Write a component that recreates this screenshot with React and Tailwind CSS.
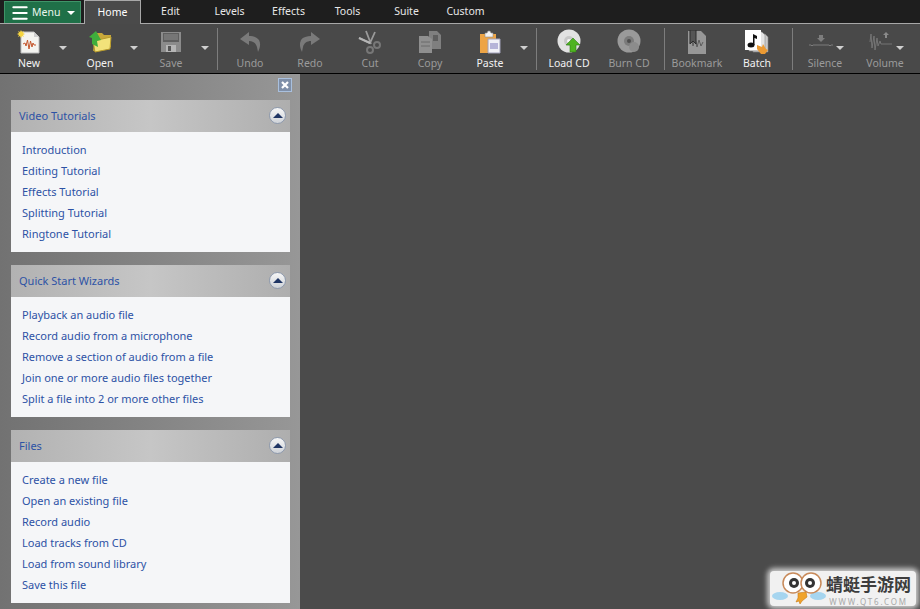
import { Menu } from "lucide-react";

const font = { fontFamily: '"Noto Sans", "DejaVu Sans", sans-serif' };

const tabs = ["Edit", "Levels", "Effects", "Tools", "Suite", "Custom"];

const panels = [
  {
    title: "Video Tutorials",
    links: ["Introduction", "Editing Tutorial", "Effects Tutorial", "Splitting Tutorial", "Ringtone Tutorial"],
  },
  {
    title: "Quick Start Wizards",
    links: [
      "Playback an audio file",
      "Record audio from a microphone",
      "Remove a section of audio from a file",
      "Join one or more audio files together",
      "Split a file into 2 or more other files",
    ],
  },
  {
    title: "Files",
    links: [
      "Create a new file",
      "Open an existing file",
      "Record audio",
      "Load tracks from CD",
      "Load from sound library",
      "Save this file",
    ],
  },
];

function NewIcon() {
  return (
    <svg width="24" height="24" viewBox="0 0 24 24">
      <path d="M4 2h13l5 5v16H4z" fill="#f4f4f0" stroke="#bdbdbd" />
      <path d="M17 2v5h5z" fill="#cfcfcf" />
      <path d="M6 14l2-1 1 3 1.500-6 1.500 9 1.500-8 1.500 6 1-4 1 2h2" fill="none" stroke="#c4552b" strokeWidth="1" />
      <path d="M4 0l1 2 2-1-1 2 2 1-2 1 1 2-2-1-1 2-1-2-2 1 1-2-2-1 2-1-1-2 2 1z" fill="#f7d640" />
    </svg>
  );
}

function OpenIcon() {
  return (
    <svg width="24" height="22" viewBox="0 0 24 22">
      <path d="M8 2h6l2 2h7v12L5 20z" fill="#c9a93a" />
      <path d="M5 10l18-4-1 12-15 3z" fill="#f2e27a" stroke="#b89b2c" />
      <path d="M8 0L1 6l3 1v6l6 3-1-6 4-1z" fill="#3fae3c" />
    </svg>
  );
}

function SaveIcon() {
  return (
    <svg width="20" height="20" viewBox="0 0 20 20">
      <path d="M0 0h20v20H0z" fill="#8b8b8b" />
      <path d="M2 1h16v9H2z" fill="#5f5f5f" />
      <path d="M3 3h14M3 5h14M3 7h14" stroke="#8e8e8e" />
      <path d="M5 13h10v7H5z" fill="#b5b5b5" />
      <path d="M7 14h3v5H7z" fill="#555555" />
    </svg>
  );
}

function UndoIcon({ flip }) {
  return (
    <svg width="22" height="22" viewBox="0 0 22 22" className={flip ? "-scale-x-100" : ""}>
      <path d="M10 1L1 8l9 6v-4c4 0 7 2 8 6l1 5c2-4 3-8 1-12-2-3-6-4-10-4z" fill="#7a7a7a" />
    </svg>
  );
}

function CutIcon() {
  return (
    <svg width="24" height="24" viewBox="0 0 24 24">
      <path d="M8 1l5 13M17 2l-5 11L1 8" fill="none" stroke="#9a9a9a" strokeWidth="1.800" />
      <path d="M1 8l11 5" stroke="#b5b5b5" strokeWidth="2" />
      <circle cx="12" cy="20" r="3" fill="none" stroke="#777777" strokeWidth="2" />
      <circle cx="19" cy="15" r="3" fill="none" stroke="#777777" strokeWidth="2" />
    </svg>
  );
}

function CopyIcon() {
  return (
    <svg width="24" height="24" viewBox="0 0 24 24">
      <path d="M11 1h8l4 4v14H11z" fill="#7f7f7f" />
      <path d="M1 6h9l4 3v14H1z" fill="#8f8f8f" />
      <path d="M3 12h9M3 16h9" stroke="#6a6a6a" />
      <path d="M15 5h5v6h-5z" fill="#5e5e5e" />
    </svg>
  );
}

function PasteIcon() {
  return (
    <svg width="22" height="24" viewBox="0 0 22 24">
      <path d="M1 4h16v19H1z" fill="#eda445" />
      <path d="M6 3h2l1-2h2l1 2h2v4H6z" fill="#f2f2f2" stroke="#8f8f8f" strokeWidth=".6" />
      <path d="M9 9h12v14H9z" fill="#f1f1f7" stroke="#a0a0b8" />
      <path d="M11 13h8v6h-8z" fill="#b6b4d8" />
    </svg>
  );
}

function DiscIcon({ load }) {
  const edge = load ? "#e2e2e2" : "#9a9a9a";
  const inner = load ? "#c8c8c8" : "#7b7b7b";
  return (
    <svg width="26" height="26" viewBox="0 0 26 26">
      <circle cx="13" cy="12" r="11.500" fill={edge} />
      <circle cx="13" cy="12" r="5" fill={inner} />
      <circle cx="13" cy="12" r="2" fill={load ? "#f5f5f5" : "#4d4d4d"} />
      {load ? (
        <path d="M17 9l7 7h-4v7h-6v-7h-4z" fill="#4fb321" stroke="#2f7d15" strokeWidth=".6" />
      ) : (
        <circle cx="18" cy="18" r="5" fill="#8c8c8c" />
      )}
    </svg>
  );
}

function BookmarkIcon() {
  return (
    <svg width="20" height="24" viewBox="0 0 20 24">
      <path d="M1 1h13l5 5v18H1z" fill="#979797" />
      <path d="M3 13l2-3 1 6 2-8 2 9 2-7 2 6 2-4" fill="none" stroke="#5b5b5b" />
      <path d="M3 0h6v14l-3-3-3 3z" fill="#555555" stroke="#2c2c2c" />
    </svg>
  );
}

function BatchIcon() {
  return (
    <svg width="24" height="24" viewBox="0 0 24 24">
      <path d="M8 4h12l3 3v15H8z" fill="#c9c9c9" stroke="#888888" strokeWidth=".6" />
      <path d="M4 2h13l3 3v16H4z" fill="#e3e3e3" stroke="#888888" strokeWidth=".6" />
      <path d="M0 0h16v20H0z" fill="#ffffff" />
      <ellipse cx="6" cy="15" rx="3.500" ry="2.500" fill="#111111" />
      <path d="M8 15V4l4 2v3l-2.500-1v7z" fill="#111111" />
      <path d="M12 15l5 2 1-3 3 5 2 1-3 4h-4l-4-5z" fill="#eb9a33" />
    </svg>
  );
}

function SilenceIcon() {
  return (
    <svg width="24" height="16" viewBox="0 0 24 16">
      <path d="M10 1h4v3h2l-4 4-4-4h2z" fill="#7d7d7d" />
      <path d="M0 11h2l1 1 1-1h16l1 1 1-1h2" fill="none" stroke="#7d7d7d" />
    </svg>
  );
}

function VolumeIcon() {
  return (
    <svg width="24" height="20" viewBox="0 0 24 20">
      <path d="M1 10l1-8 1 14 2-12 1 14 2-12 1 8 2-5 1 3h11" fill="none" stroke="#757575" />
      <path d="M17 0l3 3h-2v3h-2V3h-2z" fill="#8a8a8a" />
    </svg>
  );
}

const tools = [
  { label: "New", w: "w-[58px]", icon: <NewIcon />, on: true, arrow: "w-[13px] pl-[1px]" },
  { label: "Open", w: "w-[58px]", icon: <OpenIcon />, on: true, arrow: "w-[13px] pl-[1px]" },
  { label: "Save", w: "w-[58px]", icon: <SaveIcon />, arrow: "w-[13px] pl-[1px]", sep: "ml-[4px]" },
  { label: "Undo", w: "w-[60px]", icon: <UndoIcon /> },
  { label: "Redo", w: "w-[60px]", icon: <UndoIcon flip /> },
  { label: "Cut", w: "w-[60px]", icon: <CutIcon /> },
  { label: "Copy", w: "w-[60px]", icon: <CopyIcon /> },
  { label: "Paste", w: "w-[60px]", icon: <PasteIcon />, on: true, arrow: "w-[10px]", sep: "ml-[6px]" },
  { label: "Load CD", w: "w-[60px]", icon: <DiscIcon load />, on: true },
  { label: "Burn CD", w: "w-[60px]", icon: <DiscIcon />, sep: "ml-[5px]" },
  { label: "Bookmark", w: "w-[60px]", icon: <BookmarkIcon /> },
  { label: "Batch", w: "w-[60px]", icon: <BatchIcon />, on: true, sep: "ml-[5px]" },
  { label: "Silence", w: "w-[60px]", icon: <SilenceIcon />, over: true },
  { label: "Volume", w: "w-[60px]", icon: <VolumeIcon />, over: true },
];

function Caret() {
  return <div className="w-0 h-0 border-x-4 border-x-transparent border-t-[4px] border-t-[#cfcfcf]" />;
}

function ToolButton({ tool }) {
  return (
    <>
      <div className={`${tool.w} relative h-full flex flex-col items-center`}>
        <div className={`h-[32px] flex items-center ${tool.over ? "pr-2" : ""}`}>{tool.icon}</div>
        <span className={`text-[10.5px] leading-[14px] -mt-[2px] ${tool.on ? "text-[#f2f2f2]" : "text-[#9b9b9b]"}`}>
          {tool.label}
        </span>
        {tool.over && (
          <div className="absolute right-[11px] top-[20px]">
            <Caret />
          </div>
        )}
      </div>
      {tool.arrow && (
        <div className={`${tool.arrow} h-full flex pt-[20px]`}>
          <Caret />
        </div>
      )}
      {tool.sep && <div className={`${tool.sep} mr-[2px] w-[1px] h-[42px] mt-[2px] bg-[#7d7d7d]`} />}
    </>
  );
}

function Panel({ panel }) {
  return (
    <section className="w-[279px]">
      <div className="h-[32px] px-2 flex items-center justify-between bg-gradient-to-r from-[#b2b2b2] via-[#c6c6c6] to-[#aeaeae]">
        <h2 className="text-[11px] text-[#2d52a5]">{panel.title}</h2>
        <div className="w-[17px] h-[17px] -mt-[2px] -mr-[4px] rounded-full border border-[#8e9aae] bg-gradient-to-b from-[#f6f6f6] to-[#cfd3d8] flex items-center justify-center">
          <div className="w-0 h-0 border-x-[5px] border-x-transparent border-b-[5px] border-b-[#1f3564]" />
        </div>
      </div>
      <ul className="bg-[#f5f6f8] pt-[8px] pb-[7px] pl-[11px]">
        {panel.links.map((link) => (
          <li key={link} className="h-[21px] flex items-center text-[11px] text-[#2d52a5]">
            {link}
          </li>
        ))}
      </ul>
    </section>
  );
}

function Watermark() {
  return (
    <div className="absolute right-[4px] bottom-[3px] w-[146px] h-[35px] bg-[#f1f1f1] rounded-sm shadow-[0_0_5px_3px_rgba(240,240,240,0.75)] flex items-center">
      <svg width="56" height="35" viewBox="0 0 56 35" className="shrink-0">
        <ellipse cx="10" cy="25" rx="8" ry="4" fill="#a6d5ef" />
        <ellipse cx="48" cy="25" rx="8" ry="4" fill="#a6d5ef" />
        <circle cx="23" cy="12" r="10" fill="#ffffff" stroke="#c88a5a" strokeWidth="1.500" />
        <circle cx="41" cy="12" r="10" fill="#ffffff" stroke="#c88a5a" strokeWidth="1.500" />
        <circle cx="24" cy="12" r="5" fill="#333333" />
        <circle cx="40" cy="12" r="5" fill="#333333" />
        <circle cx="24" cy="12" r="2" fill="#ffffff" />
        <circle cx="40" cy="12" r="2" fill="#ffffff" />
        <path d="M28 22l8-1 1 5-5 4-2 3-1-3-3 1 2-4z" fill="#f0a32b" stroke="#c97a14" strokeWidth=".6" />
      </svg>
      <div className="flex flex-col items-center">
        <div
          className="text-[17px] leading-[19px] mt-[3px] font-bold text-[#3d3d3d]"
          style={{ fontFamily: '"Noto Sans CJK SC", sans-serif' }}
        >
          蜻蜓手游网
        </div>
        <div className="text-[8px] leading-[10px] mt-[4px] tracking-[1.800px] text-[#a8a8a8]">WWW.QT6.COM</div>
      </div>
    </div>
  );
}

export default function App() {
  return (
    <div className="relative w-[920px] h-[609px] overflow-hidden flex flex-col bg-[#4b4b4b]" style={font}>
      <header className="h-[24px] bg-[#1e1e1e] flex border-b border-[#a8a8a8] shrink-0">
        <div className="ml-[4px] mt-[1px] w-[77px] h-[22px] bg-[#1f7048] border-x border-t border-[#3f9468] flex items-center pl-[5px] gap-[2px] text-[10.5px] text-[#eaf5ee]">
          <Menu size={20} strokeWidth={2.400} className="text-white" />
          <span>Menu</span>
          <div className="ml-[5px] w-0 h-0 border-x-4 border-x-transparent border-t-[4px] border-t-white" />
        </div>
        <div className="ml-[3px] w-[57px] h-[24px] bg-[#4a4a4a] border-x border-t border-[#a8a8a8] flex items-center justify-center text-[10.5px] text-white">
          Home
        </div>
        {tabs.map((tab) => (
          <div key={tab} className="w-[59px] flex items-center justify-center text-[10.5px] text-[#e8e8e8]">
            {tab}
          </div>
        ))}
      </header>

      <div className="h-[50px] shrink-0 bg-[#494949] border-b border-black flex pt-[2px]">
        {tools.map((tool) => (
          <ToolButton key={tool.label} tool={tool} />
        ))}
      </div>

      <div className="flex-1 flex min-h-0">
        <aside className="w-[300px] shrink-0 bg-gradient-to-r from-[#727272] to-[#979797] pl-[11px]">
          <div className="h-[26px] flex items-end justify-end pr-[8px] pb-[8px] w-[289px]">
            <div className="w-[14px] h-[14px] bg-[#7f8fa8] border border-[#a9c0de] flex items-center justify-center">
              <svg width="10" height="10" viewBox="0 0 10 10">
                <path d="M2 2l6 6M8 2l-6 6" stroke="#ffffff" strokeWidth="2.200" />
              </svg>
            </div>
          </div>
          <div className="flex flex-col gap-[13px]">
            {panels.map((panel) => (
              <Panel key={panel.title} panel={panel} />
            ))}
          </div>
        </aside>
        <main className="flex-1 bg-[#4b4b4b]" />
      </div>

      <Watermark />
    </div>
  );
}
